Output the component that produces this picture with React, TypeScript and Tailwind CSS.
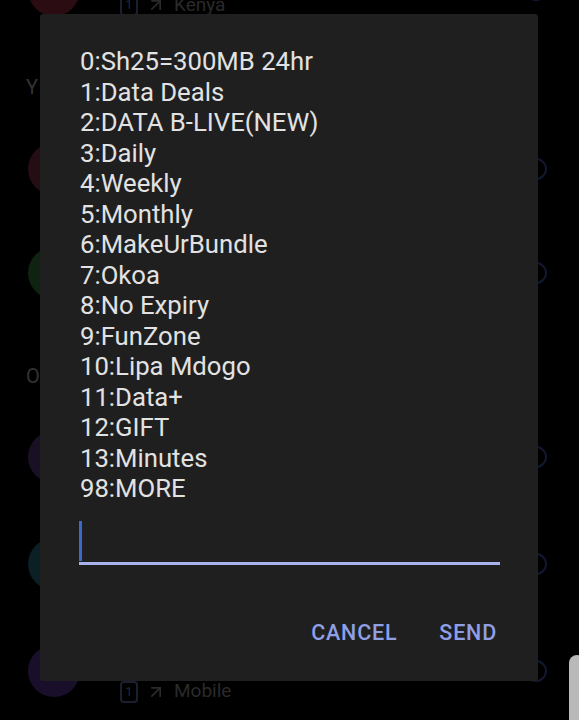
import { ArrowUpRight } from 'lucide-react'

const menu = [
  '0:Sh25=300MB 24hr',
  '1:Data Deals',
  '2:DATA B-LIVE(NEW)',
  '3:Daily',
  '4:Weekly',
  '5:Monthly',
  '6:MakeUrBundle',
  '7:Okoa',
  '8:No Expiry',
  '9:FunZone',
  '10:Lipa Mdogo',
  '11:Data+',
  '12:GIFT',
  '13:Minutes',
  '98:MORE',
]

function Sim({ label }: { label: string }) {
  return (
    <div className="flex items-center gap-2 text-[19px] text-[#2a2a2a]">
      <span className="w-[18px] h-[22px] border-2 border-[#1c1f2e] rounded-sm flex items-center justify-center text-[13px] text-[#23263a]">
        1
      </span>
      <ArrowUpRight className="w-5 h-5 text-[#2a2a2a]" />
      <span>{label}</span>
    </div>
  )
}

function Row({ circle, h, sub, subPad = 'pt-[26px]' }: { circle: string; h: string; sub?: string; subPad?: string }) {
  return (
    <div className={`${h} flex items-center pl-[28px] pr-[32px]`}>
      <div className={`w-[52px] h-[52px] rounded-full ${circle}`} />
      <div className={`flex-1 pl-[40px] ${subPad}`}>{sub && <Sim label={sub} />}</div>
      <div className="w-[22px] h-[22px] rounded-full border-2 border-[#121830]" />
    </div>
  )
}

export default function App() {
  return (
    <div
      className="relative h-[720px] w-[579px] overflow-hidden bg-black"
      style={{ fontFamily: 'Roboto, "Noto Sans", sans-serif' }}
    >
      {/* Background list */}
      <div className="flex flex-col mt-[-62px]">
        <Row circle="bg-[#2a0c12]" h="h-[104px]" sub="Kenya" subPad="pt-[30px]" />
        <div className="h-[75px] flex items-start pt-[30px] pl-[26px] text-[20px] text-[#333333]">Y</div>
        <Row circle="bg-[#250d14]" h="h-[104px]" />
        <Row circle="bg-[#0f2310]" h="h-[104px]" />
        <div className="h-[78px] flex items-start pt-[36px] pl-[26px] text-[20px] text-[#333333]">O</div>
        <Row circle="bg-[#1a1024]" h="h-[107px]" />
        <Row circle="bg-[#0b1f24]" h="h-[107px]" />
        <Row circle="bg-[#1a0f2a]" h="h-[107px]" sub="Mobile" subPad="pt-[42px]" />
      </div>

      {/* Edge handle */}
      <div className="absolute right-[-6px] top-[655px] w-[16px] h-[80px] rounded-lg bg-[#b9b9b9]" />

      {/* USSD dialog */}
      <div className="absolute left-[40px] top-[14px] w-[498px] h-[667px] rounded-[3px] bg-[#1f1f1f] flex flex-col">
        <div className="pt-[32px] px-[40px] text-[25.7px] leading-[30.5px] text-[#e2e2e2]">
          {menu.map(m => (
            <div key={m}>{m}</div>
          ))}
        </div>
        <div className="mt-[15px] ml-[39px] mr-[38px] h-[46px] border-b-[3px] border-[#a8b3ec] flex items-start pt-[2px]">
          <div className="w-[3px] h-[40px] bg-[#3d68cf]" />
        </div>
        <div className="flex justify-end gap-[42px] pr-[41px] mt-[52px] text-[21.5px] font-medium tracking-[0.8px] text-[#8e9fe6]">
          <span>CANCEL</span>
          <span>SEND</span>
        </div>
      </div>
    </div>
  )
}
